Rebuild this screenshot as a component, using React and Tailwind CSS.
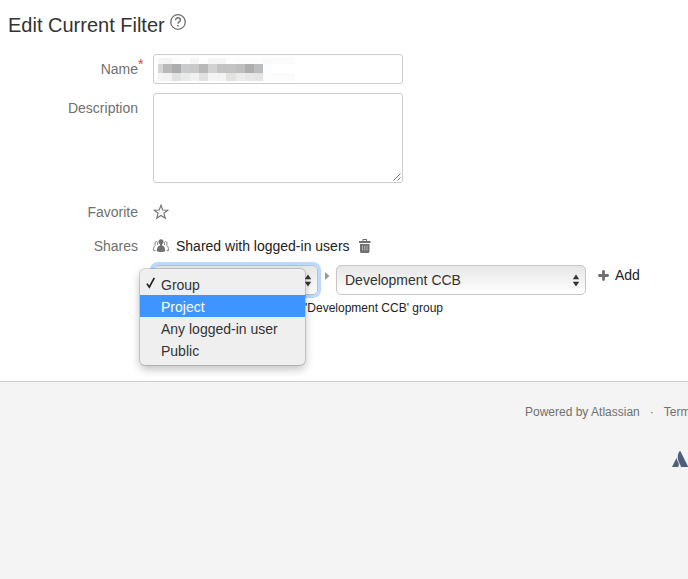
import React from "react";

// ── Data ─────────────────────────────────────────────────────────────────────
const SHARE_TYPES = ["Group", "Project", "Any logged-in user", "Public"];
const SELECTED = "Group";
const HIGHLIGHTED = "Project";

// Redacted filter name: column widths and the three rows of shades
const MOSAIC_COLS = [5, 9, 9, 9, 9, 9, 9, 9, 10, 9, 9, 9, 9, 23];
const MOSAIC_ROWS = [
  {
    height: 6,
    shades: ["#f5f5f5", "#f4f4f4", "#fcfcfc", "#fefefe", "#f5f5f5", "#fefefe", "#f6f6f6", "#f5f5f5", "#fdfdfd", "#fcfcfc", "#fdfdfd", "#fdfdfd", "#fafafa", "#fbfbfb"],
  },
  {
    height: 9,
    shades: ["#d5d5d5", "#b9b9b9", "#acacac", "#c9cbcd", "#c9c9ca", "#b8b8b8", "#d2d2d3", "#c2c2c2", "#c3c3c3", "#bebebe", "#adadad", "#bcbcbd", "#fcfdfe", "#ffffff"],
  },
  {
    height: 8,
    shades: ["#f4f4f4", "#f2f2f2", "#e0e1e0", "#e8ebea", "#f1f1f1", "#e1e1e1", "#f4f4f4", "#f3f3f3", "#e2e2e1", "#ececec", "#e6e7e6", "#e4e4e4", "#fdfdfd", "#fbfbfb"],
  },
];

// ── Icons ────────────────────────────────────────────────────────────────────
const HelpIcon = () => (
  <svg width="16" height="16" viewBox="0 0 16 16" fill="none" stroke="#707070">
    <circle cx="8" cy="8" r="7.3" strokeWidth="1.3" />
    <path d="M5.6 6.2C5.6 4.6 6.6 3.8 8 3.8s2.4.8 2.4 2.1c0 1.7-2.4 1.8-2.4 3.9" strokeWidth="1.4" />
    <path d="M8 11v1.6" strokeWidth="1.6" />
  </svg>
);

const StarIcon = () => (
  <svg width="16" height="16" viewBox="0 0 16 16" fill="none" stroke="#707070" strokeWidth="1.1">
    <path d="M8 1.2l1.8 4.8 5 .2-3.9 3.1 1.4 5L8 11.5l-4.3 2.8 1.4-5-3.9-3.1 5-.2z" />
  </svg>
);

const PeopleIcon = () => (
  <svg width="16" height="16" viewBox="0 0 16 16" fill="none">
    <g stroke="#858585" strokeWidth="1">
      <path d="M4.3 7.2C5 5.6 4.7 3.5 3.3 3.5S1.6 5.8 2.3 7.4C1 8.2.5 9.2.5 12.6H2.6" />
      <path d="M11.7 7.2c-.7-1.6-.4-3.7 1-3.7s1.7 2.3 1 3.9c1.3.8 1.8 1.8 1.8 5.2H13.4" />
    </g>
    <circle cx="8" cy="3.8" r="2.5" fill="#707070" />
    <path d="M7 5.8h2v1.7c2.2.5 3.1 2 3.1 5.8-1.3 1-6.9 1-8.2 0 0-3.8.9-5.3 3.1-5.8z" fill="#707070" />
  </svg>
);

const TrashIcon = () => (
  <svg width="12" height="14" viewBox="0 0 12 14" fill="#707070">
    <path d="M3.5 0H8v2h3.5v2H0V2h3.5z" />
    <path d="M1 5h9.5v7.5c0 .9-.6 1.5-1.5 1.5H2.5c-.9 0-1.5-.6-1.5-1.5z" />
    <path d="M3.5 6.5v5M5.75 6.5v5M8 6.5v5" stroke="#bbb" strokeWidth="0.9" />
    <path d="M4.5 1H7v1H4.5z" fill="#fff" />
  </svg>
);

const UpDownIcon = () => (
  <svg width="8" height="13" viewBox="0 0 8 13" fill="#333">
    <path d="M4 .5l3.2 4.8H.8zM4 12.5L.8 7.7h6.4z" />
  </svg>
);

const PlusIcon = () => (
  <svg width="11" height="11" viewBox="0 0 11 11" stroke="#707070" strokeWidth="2.8" strokeLinecap="round">
    <path d="M5.5 1.4v8.2M1.4 5.5h8.2" />
  </svg>
);

const CheckIcon = () => (
  <svg width="10" height="12" viewBox="0 0 10 12" fill="none" stroke="#222" strokeWidth="1.7">
    <path d="M.9 6.6l2.4 3.6L8.3.8" />
  </svg>
);

const AtlassianLogo = () => (
  <svg width="17" height="16" viewBox="0 0 17 16" fill="#505f79" className="shrink-0">
    <path d="M7.8 0c.5 0 .7.4.9.8L16.3 16H9.2L6.3 9.8C5.3 6.5 5.6 2.5 7.8 0z" />
    <path d="M4.6 6.8c.2 2 .9 3.2 1.8 5 .7 1.5.4 3-.2 4.2H0z" />
  </svg>
);

// ── Form pieces ──────────────────────────────────────────────────────────────
const Label = ({ children, required }) => (
  <div className="relative w-[138px] shrink-0 text-right text-[#707070]">
    {children}
    {required && <span className="absolute -top-[5px] left-full text-[#d04437]">*</span>}
  </div>
);

const Mosaic = () => (
  <div className="flex flex-col">
    {MOSAIC_ROWS.map((row, r) => (
      <div key={r} className="flex" style={{ height: row.height }}>
        {row.shades.map((color, i) => (
          <div key={i} style={{ width: MOSAIC_COLS[i], background: color }} />
        ))}
      </div>
    ))}
  </div>
);

const ShareMenu = () => (
  <div className="absolute -left-[13px] top-[4px] z-10 w-[165px] rounded-[5px] bg-[#efefef] py-1 shadow-[0_0_0_1px_rgba(0,0,0,0.14),0_4px_10px_rgba(0,0,0,0.26)]">
    {SHARE_TYPES.map((type) => (
      <div
        key={type}
        className={`flex h-[22px] items-center pt-[2px] ${type === HIGHLIGHTED ? "bg-[#3e95ff] text-white" : "text-[#333]"}`}
      >
        <span className="flex w-[21px] -translate-y-[2px] pl-[6px]">{type === SELECTED && <CheckIcon />}</span>
        <span>{type}</span>
      </div>
    ))}
  </div>
);

// ── Main Component ───────────────────────────────────────────────────────────
export default function App() {
  return (
    <div className="flex h-screen w-full flex-col overflow-hidden bg-white font-['Liberation_Sans',Arial,sans-serif] text-sm leading-5 text-[#333]">
      <main className="h-[381px] shrink-0">
        <div className="flex items-start gap-[5px] pl-2 pt-[10px]">
          <h1 className="text-[20px] leading-[30px]">Edit Current Filter</h1>
          <div className="pt-[4px]">
            <HelpIcon />
          </div>
        </div>

        <div className="mt-[14px] flex gap-[15px]">
          <div className="pt-[5px]">
            <Label required>Name</Label>
          </div>
          <div className="h-[30px] w-[250px] rounded-[3px] border border-[#ccc] pl-1 pt-[3px]">
            <Mosaic />
          </div>
        </div>

        <div className="mt-[9px] flex gap-[15px]">
          <div className="pt-[5px]">
            <Label>Description</Label>
          </div>
          <div className="flex h-[90px] w-[250px] items-end justify-end rounded-[3px] border border-[#ccc] p-px">
            <svg width="8" height="8" viewBox="0 0 8 8" stroke="#777" strokeWidth="1">
              <path d="M.5 7.5l7-7M4.5 7.5l3-3" />
            </svg>
          </div>
        </div>

        <div className="mt-[19px] flex items-center gap-[15px]">
          <Label>Favorite</Label>
          <StarIcon />
        </div>

        <div className="mt-[14px] flex items-center gap-[15px]">
          <Label>Shares</Label>
          <div className="flex items-center">
            <PeopleIcon />
            <span className="ml-[7px] text-[#222]">Shared with logged-in users</span>
            <span className="ml-[9px]">
              <TrashIcon />
            </span>
          </div>
        </div>

        <div className="ml-[153px] mt-[9px] flex">
          <div className="relative h-[30px] w-[165px]">
            <div className="flex h-full items-center justify-end rounded-[5px] border border-[#b5c3d0] bg-gradient-to-b from-[#e6e6e6] to-white pr-[5px] shadow-[0_0_0_3px_#b9dbff]">
              <UpDownIcon />
            </div>
            <ShareMenu />
          </div>
          <svg width="5" height="8" viewBox="0 0 5 8" fill="#999" className="ml-[7px] mt-[7px]">
            <path d="M0 0l4.5 4L0 8z" />
          </svg>
          <div className="ml-[6px] flex h-[30px] w-[250px] items-center justify-between rounded-[5px] border border-[#c6c6c6] bg-gradient-to-b from-[#e6e6e6] to-white pl-2 pr-[5px]">
            <span>Development CCB</span>
            <UpDownIcon />
          </div>
          <div className="ml-[12px] flex h-5 items-center gap-[6px]">
            <PlusIcon />
            <span className="text-[#222]">Add</span>
          </div>
        </div>

        <div className="ml-[305px] mt-[5px] text-xs leading-4 text-[#222]">'Development CCB' group</div>
      </main>

      <footer className="flex-1 border-t border-[#ccc] bg-[#f4f4f4] text-xs text-[#707070]">
        <div className="flex whitespace-nowrap pl-[525px] pt-[22px]">
          <span>Powered by Atlassian</span>
          <span className="ml-[10px]">·</span>
          <span className="ml-[10px]">Terms of Use</span>
        </div>
        <div className="flex pl-[672px] pt-[31px]">
          <AtlassianLogo />
        </div>
      </footer>
    </div>
  );
}
